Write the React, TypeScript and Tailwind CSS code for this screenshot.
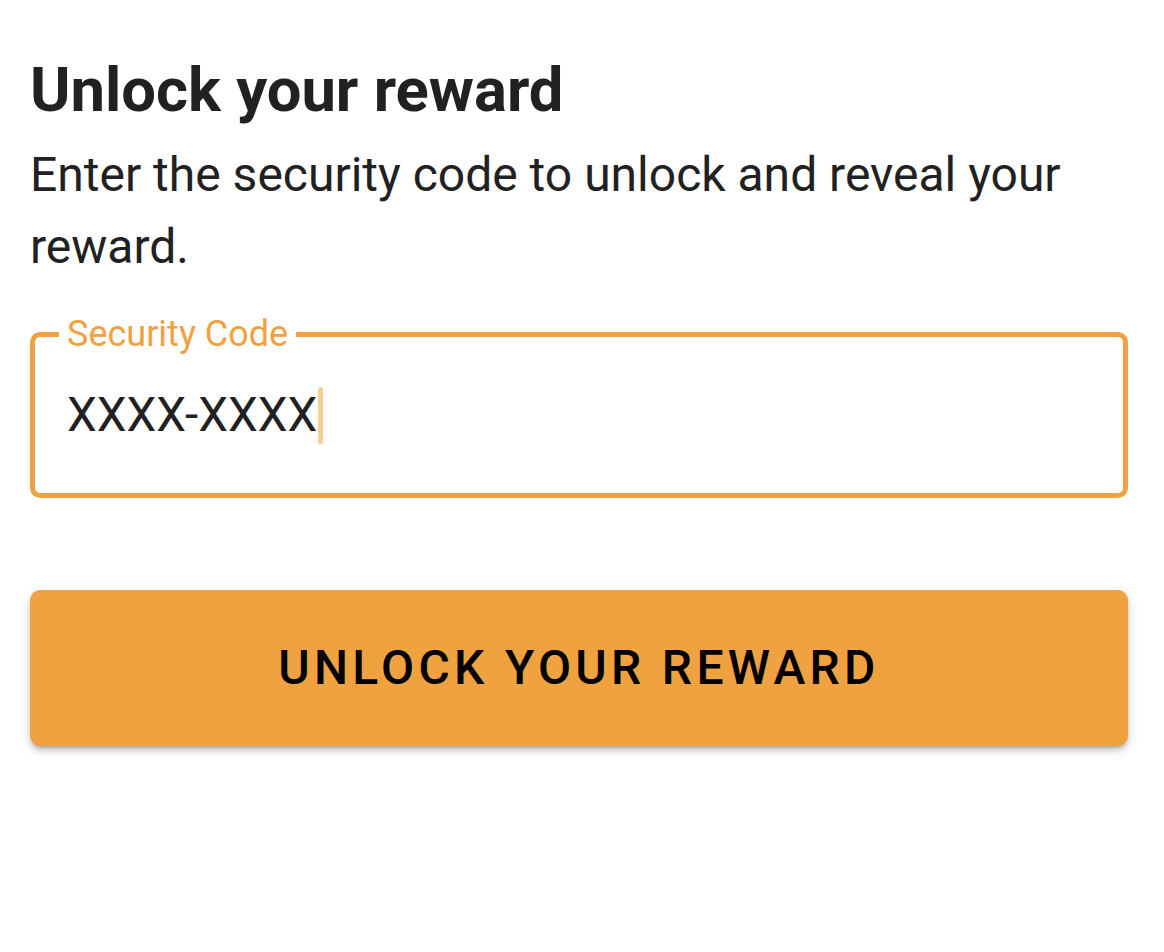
export default function App() {
  return (
    <div className="min-h-[952px] bg-white font-['Roboto',sans-serif] text-[#212121]">
      <div className="flex w-[1158px] flex-col px-[30px] pt-[54px]">
        <h1 className="text-[61.5px] font-bold leading-[72px]">Unlock your reward</h1>
        <p className="mt-[13px] text-[48px] leading-[72px]">
          Enter the security code to unlock and reveal your reward.
        </p>

        <div className="relative mt-[49px] flex h-[166px] items-center rounded-[10px] border-[5px] border-[#f0a140] pl-[32px]">
          <span className="absolute left-[24px] top-[-23px] bg-white px-[8px] text-[36px] leading-[40px] text-[#f0a140]">
            Security Code
          </span>
          <span className="text-[47.5px] leading-[56px]">XXXX-XXXX</span>
          <span className="ml-[1px] h-[57px] w-[5px] rounded-full bg-[#f6cf92]" aria-hidden />
        </div>

        <button className="mt-[92px] flex h-[156px] items-center justify-center rounded-[10px] bg-[#f0a140] text-[48px] font-medium uppercase leading-[56px] tracking-[0.09em] text-black shadow-[0_5px_3px_-4px_rgba(0,0,0,0.2),0_5px_5px_0_rgba(0,0,0,0.14),0_3px_13px_0_rgba(0,0,0,0.12)]">
          Unlock your reward
        </button>
      </div>
    </div>
  );
}
